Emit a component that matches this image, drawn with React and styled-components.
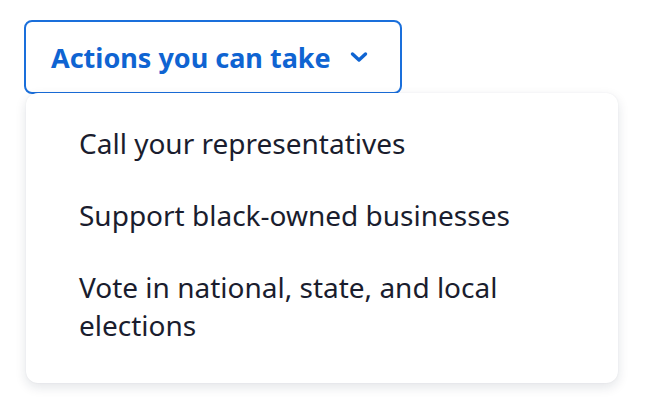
import React from "react";
import styled, { createGlobalStyle } from "styled-components";

const GlobalStyle = createGlobalStyle`
  body {
    margin: 0;
    background: #ffffff;
    font-family: "Noto Sans", "Open Sans", sans-serif;
  }
`;

const Page = styled.div`
  padding: 20px 24px 30px;
`;

const Dropdown = styled.div`
  display: flex;
  flex-direction: column;
  width: 596px;
`;

const Trigger = styled.button`
  display: flex;
  align-items: center;
  gap: 19px;
  width: 378px;
  height: 74px;
  padding: 0 0 0 25px;
  box-sizing: border-box;
  background: #fff;
  border: 2px solid #1a6fdb;
  border-radius: 8px;
  color: #0f64d2;
  font-family: "Noto Sans", sans-serif;
  font-size: 27px;
  font-weight: 700;
  cursor: pointer;
`;

const Menu = styled.ul`
  position: relative;
  z-index: 1;
  width: 592px;
  margin: -1px 0 0 2px;
  padding: 31px 0 39px;
  box-sizing: border-box;
  list-style: none;
  background: #fff;
  border-radius: 12px;
  box-shadow: 0 4px 12px rgba(20, 30, 60, 0.12), 0 0 2px rgba(20, 30, 60, 0.06);
  display: flex;
  flex-direction: column;
  gap: 34px;
`;

const Item = styled.li`
  padding: 0 80px 0 53px;
  color: #1a1d2e;
  font-size: 28px;
  line-height: 38px;
`;

const Chevron = () => (
  <svg width="18" height="12" viewBox="0 0 18 12" aria-hidden="true">
    <path d="M2.5 3 L9 9 L15.5 3" fill="none" stroke="currentColor" strokeWidth="3.4" strokeLinecap="round" strokeLinejoin="round" />
  </svg>
);

const actions = [
  "Call your representatives",
  "Support black-owned businesses",
  "Vote in national, state, and local elections",
];

export default function App() {
  return (
    <Page>
      <GlobalStyle />
      <Dropdown>
        <Trigger>
          Actions you can take
          <Chevron />
        </Trigger>
        <Menu>
          {actions.map((a) => (
            <Item key={a}>{a}</Item>
          ))}
        </Menu>
      </Dropdown>
    </Page>
  );
}
